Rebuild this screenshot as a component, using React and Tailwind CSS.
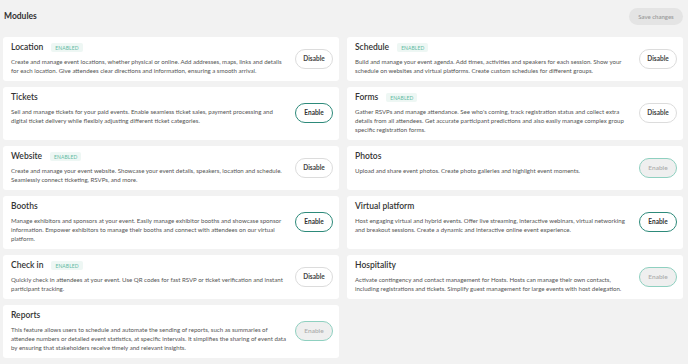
const modules = [
  {
    name: "Location",
    enabled: true,
    text: "Create and manage event locations, whether physical or online. Add addresses, maps, links and details for each location. Give attendees clear directions and information, ensuring a smooth arrival.",
  },
  {
    name: "Schedule",
    enabled: true,
    text: "Build and manage your event agenda. Add times, activities and speakers for each session. Show your schedule on websites and virtual platforms. Create custom schedules for different groups.",
  },
  {
    name: "Tickets",
    action: "enable",
    text: "Sell and manage tickets for your paid events. Enable seamless ticket sales, payment processing and digital ticket delivery while flexibly adjusting different ticket categories.",
  },
  {
    name: "Forms",
    enabled: true,
    text: "Gather RSVPs and manage attendance. See who's coming, track registration status and collect extra details from all attendees. Get accurate participant predictions and also easily manage complex group specific registration forms.",
  },
  {
    name: "Website",
    enabled: true,
    text: "Create and manage your event website. Showcase your event details, speakers, location and schedule. Seamlessly connect ticketing, RSVPs, and more.",
  },
  {
    name: "Photos",
    action: "locked",
    text: "Upload and share event photos. Create photo galleries and highlight event moments.",
  },
  {
    name: "Booths",
    action: "enable",
    text: "Manage exhibitors and sponsors at your event. Easily manage exhibitor booths and showcase sponsor information. Empower exhibitors to manage their booths and connect with attendees on our virtual platform.",
  },
  {
    name: "Virtual platform",
    action: "enable",
    text: "Host engaging virtual and hybrid events. Offer live streaming, interactive webinars, virtual networking and breakout sessions. Create a dynamic and interactive online event experience.",
  },
  {
    name: "Check in",
    enabled: true,
    text: "Quickly check in attendees at your event. Use QR codes for fast RSVP or ticket verification and instant participant tracking.",
  },
  {
    name: "Hospitality",
    action: "locked",
    text: "Activate contingency and contact management for Hosts. Hosts can manage their own contacts, including registrations and tickets. Simplify guest management for large events with host delegation.",
  },
  {
    name: "Reports",
    action: "locked",
    text: "This feature allows users to schedule and automate the sending of reports, such as summaries of attendee numbers or detailed event statistics, at specific intervals. It simplifies the sharing of event data by ensuring that stakeholders receive timely and relevant insights.",
  },
];

const ActionButton = ({ enabled, action }) => {
  if (enabled) {
    return (
      <button className="h-[20px] w-[38px] shrink-0 rounded-full border border-[#dcdcdc] bg-white text-[6.5px] font-bold text-[#444]">
        Disable
      </button>
    );
  }
  if (action === "locked") {
    return (
      <button className="h-[20px] w-[38px] shrink-0 rounded-full border-[1.5px] border-[#8fd0c0] bg-[#efefef] text-[6.5px] font-semibold text-[#adadad]">
        Enable
      </button>
    );
  }
  return (
    <button className="h-[20px] w-[38px] shrink-0 rounded-full border-[1.5px] border-[#2d8a7a] bg-white text-[6.5px] font-bold text-[#333]">
      Enable
    </button>
  );
};

const ModuleCard = ({ name, enabled, action, text }) => (
  <div className="flex items-center gap-[8px] rounded-[3px] bg-white pb-[6px] pl-[8px] pr-[6px] pt-[5px]">
    <div className="flex-1 self-start">
      <div className="flex h-[11px] items-center gap-[8px]">
        <span className="text-[8.5px] font-semibold text-[#333]">{name}</span>
        {enabled ? (
          <span className="rounded-[2px] bg-[#eef7f4] px-[4px] py-[1.5px] text-[5px] uppercase leading-[6px] tracking-[0.02em] text-[#5fbaa2]">
            Enabled
          </span>
        ) : null}
      </div>
      <p className="mt-[4px] text-[6.1px] leading-[9px] text-[#555]">{text}</p>
    </div>
    <ActionButton enabled={enabled} action={action} />
  </div>
);

export default function App() {
  return (
    <div
      className="h-[364px] w-[688px] overflow-hidden bg-[#f2f2f2] pl-[3px] pr-[5px]"
      style={{ fontFamily: "Lato, 'Open Sans', sans-serif" }}
    >
      <div className="flex h-[33px] items-center justify-between pl-[1px]">
        <h1 className="text-[8.5px] font-bold text-[#333]">Modules</h1>
        <button className="h-[17px] w-[54px] rounded-full bg-[#e4e4e4] text-[6px] font-semibold text-[#9a9a9a]">
          Save changes
        </button>
      </div>
      <div className="mt-[4px] grid grid-cols-2 gap-x-[8px] gap-y-[6px]">
        {modules.map((m) => (
          <ModuleCard key={m.name} {...m} />
        ))}
      </div>
    </div>
  );
}
